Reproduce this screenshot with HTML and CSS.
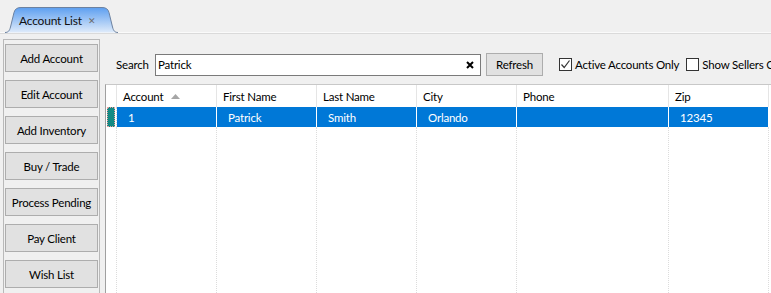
FILE: index.html
```html
<!DOCTYPE html>
<html>
 <head>
  <title>Account List</title>
  <link rel="stylesheet" href="styles.css">
 </head>
 <body>
  <div class="tabstrip">
   <div class="tab">
    <svg class="tab-shape" width="114" height="26" viewBox="0 0 114 26">
     <defs>
      <linearGradient id="tabFill" x1="0" y1="0" x2="0" y2="1">
       <stop offset="0" stop-color="#5d9ff0"/>
       <stop offset="1" stop-color="#dfebfa"/>
      </linearGradient>
     </defs>
     <path d="M0 25.5 C3 25.5 4.5 24 5.5 20 L9 5.5 C10 2 12 0.5 16 0.5 L97 0.5 C101 0.5 103 2 104 5.5 L107.5 20 C108.5 24 110 25.5 113 25.5" fill="url(#tabFill)" stroke="#6d82a0"/>
    </svg>
    <span class="tab-title">Account List</span>
    <span class="tab-close">&#x2715;</span>
   </div>
  </div>

  <div class="content">
   <div class="sidebar">
    <button class="side-btn">Add Account</button>
    <button class="side-btn">Edit Account</button>
    <button class="side-btn">Add Inventory</button>
    <button class="side-btn">Buy / Trade</button>
    <button class="side-btn">Process Pending</button>
    <button class="side-btn">Pay Client</button>
    <button class="side-btn">Wish List</button>
   </div>

   <div class="main">
    <div class="toolbar">
     <span class="search-label">Search</span>
     <div class="search-box">
      <span class="search-text">Patrick</span>
      <svg class="clear-icon" width="8" height="8" viewBox="0 0 8 8">
       <path d="M1 1 L7 7 M7 1 L1 7" stroke="#000" stroke-width="2"/>
      </svg>
     </div>
     <button class="refresh-btn">Refresh</button>
     <label class="check">
      <span class="check-box">
       <svg width="11" height="11" viewBox="0 0 11 11">
        <path d="M1.5 5.5 L4.2 8.5 L9.5 1.5" fill="none" stroke="#333" stroke-width="1.2"/>
       </svg>
      </span>
      Active Accounts Only
     </label>
     <label class="check">
      <span class="check-box"></span>
      Show Sellers Only
     </label>
    </div>

    <div class="grid">
     <table class="accounts">
      <colgroup>
       <col class="c-rowhead">
       <col class="c-std">
       <col class="c-std">
       <col class="c-std">
       <col class="c-std">
       <col class="c-wide">
       <col class="c-std">
       <col>
      </colgroup>
      <tr class="head">
       <th></th>
       <th>Account <svg class="sort" width="9" height="5" viewBox="0 0 9 5"><path d="M0 5 L4.5 0 L9 5 Z" fill="#a6a6a6"/></svg></th>
       <th>First Name</th>
       <th>Last Name</th>
       <th>City</th>
       <th>Phone</th>
       <th>Zip</th>
       <th class="blank"></th>
      </tr>
      <tr class="row selected">
       <td class="rowhead"><span class="marker"></span></td>
       <td>1</td>
       <td>Patrick</td>
       <td>Smith</td>
       <td>Orlando</td>
       <td></td>
       <td>12345</td>
       <td class="blank"></td>
      </tr>
      <tr class="filler">
       <td class="rowhead"></td>
       <td></td>
       <td></td>
       <td></td>
       <td></td>
       <td></td>
       <td></td>
       <td class="blank"></td>
      </tr>
     </table>
    </div>
   </div>
  </div>
 </body>
</html>
```

FILE: styles.css
```css
body {
    margin: 0;
    background-color: #f0f0f0;
    font-family: Lato, "Liberation Sans", sans-serif;
    font-size: 11.5px;
    letter-spacing: -0.2px;
    color: #000;
    overflow: hidden;
    height: 293px;
}

/* tab strip */
.tabstrip {
    height: 32px;
    border-bottom: 1px solid #fafafa;
    box-shadow: 0 1px 0 #dadada;
    display: flex;
    align-items: flex-end;
    padding-left: 5px;
}

.tab {
    position: relative;
    width: 114px;
    height: 26px;
    display: flex;
    align-items: center;
    padding-left: 14px;
    box-sizing: border-box;
    margin-bottom: -1px;
}

.tab-shape {
    position: absolute;
    left: 0;
    top: 0;
}

.tab-title {
    position: relative;
    font-size: 12px;
    color: #111;
}

.tab-close {
    position: relative;
    margin-left: 6px;
    font-size: 9px;
    color: #6b6b6b;
}

/* content */
.content {
    display: flex;
    height: 260px;
}

.sidebar {
    margin: 6px 0 0 3px;
    width: 97px;
    flex-shrink: 0;
    box-sizing: border-box;
    border: 1px solid #b9b9b9;
    border-bottom: none;
    padding: 4px 1px 0 1px;
    display: flex;
    flex-direction: column;
    gap: 8px;
}

.side-btn {
    height: 28px;
    width: 93px;
    background-color: #e1e1e1;
    border: 1px solid #adadad;
    font-family: inherit;
    font-size: 11.5px;
    letter-spacing: -0.2px;
    color: #000;
    padding: 0;
}

.main {
    flex: 1;
    display: flex;
    flex-direction: column;
    padding-left: 5px;
    min-width: 0;
}

.toolbar {
    display: flex;
    align-items: center;
    height: 23px;
    margin-top: 20px;
    padding-left: 11px;
    white-space: nowrap;
}

.toolbar > * {
    flex-shrink: 0;
}

.search-label {
    width: 39px;
}

.search-box {
    width: 326px;
    height: 22px;
    box-sizing: border-box;
    background: #fff;
    border: 1px solid #7a7a7a;
    display: flex;
    align-items: center;
    justify-content: space-between;
    padding: 0 6px 0 2px;
}

.refresh-btn {
    margin-left: 5px;
    width: 57px;
    height: 23px;
    background-color: #e1e1e1;
    border: 1px solid #adadad;
    font-family: inherit;
    font-size: 11.5px;
    letter-spacing: -0.2px;
    color: #000;
    padding: 0;
}

.check {
    display: flex;
    align-items: center;
    margin-left: 16px;
}

.check + .check {
    margin-left: 7px;
}

.check-box {
    width: 13px;
    height: 13px;
    box-sizing: border-box;
    border: 1px solid #333;
    background: #fff;
    margin-right: 3px;
    display: flex;
    align-items: center;
    justify-content: center;
}

/* grid */
.grid {
    margin-top: 8px;
    flex: 1;
    background: #fff;
    border-left: 1px solid #a0a0a0;
    border-top: 1px solid #c8c8c8;
    overflow: hidden;
}

.accounts {
    border-collapse: separate;
    border-spacing: 0;
    table-layout: fixed;
    width: 700px;
}

.c-rowhead { width: 11px; }
.c-std { width: 100px; }
.c-wide { width: 152px; }

.accounts th,
.accounts td {
    box-sizing: border-box;
    padding: 0;
    white-space: nowrap;
    overflow: hidden;
    text-align: left;
}

.head th {
    height: 22px;
    font-weight: normal;
    padding-left: 6px;
    border-right: 1px solid #e5e5e5;
}

.head th:first-child {
    padding: 0;
}

.sort {
    margin-left: 5px;
    vertical-align: 2px;
}

.row td {
    height: 20px;
    padding-left: 11px;
    border-right: 1px solid #fff;
}

.selected td {
    background-color: #0078d7;
    color: #fff;
}

.selected td.rowhead {
    background-color: #fff;
    padding: 0 1px;
    border-right: 1px dotted #d6d6d6;
}

.marker {
    display: block;
    height: 20px;
    background-color: #148a84;
    box-sizing: border-box;
    border: 1px dotted #e8a0a0;
}

.filler td {
    height: 180px;
    border-right: 1px dotted #dcdcdc;
}

.accounts .blank,
.selected td.blank {
    background: #fff;
    border-right: none;
}
```
